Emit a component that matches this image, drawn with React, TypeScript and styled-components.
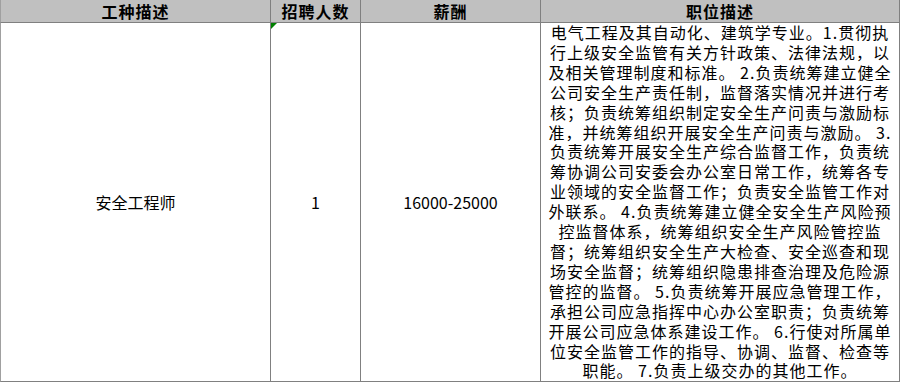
import styled, { createGlobalStyle } from 'styled-components';

const GlobalStyle = createGlobalStyle`
  html, body {
    margin: 0;
    padding: 0;
    background: #ffffff;
  }
  body {
    font-family: "Noto Sans CJK SC", "Noto Sans", sans-serif;
    color: #000000;
  }
`;

const Sheet = styled.div`
  width: 901px;
  height: 383px;
  overflow: hidden;
  background: #ffffff;
`;

const Row = styled.div<{ $height: number }>`
  display: grid;
  grid-template-columns: 270px 90px 180px 359px;
  height: ${(p) => p.$height}px;
  border-left: 1px solid #a0a0a0;
  border-bottom: 1px solid #808080;
  box-sizing: border-box;
  width: 900px;
`;

const HeadCell = styled.div`
  display: flex;
  align-items: center;
  justify-content: center;
  background: #c0c0c0;
  border-right: 1px solid #808080;
  font-size: 16px;
  font-weight: 700;
  letter-spacing: 1px;
  line-height: 22px;
  box-sizing: border-box;
`;

const Cell = styled.div`
  position: relative;
  display: flex;
  align-items: center;
  justify-content: center;
  border-right: 1px solid #808080;
  font-size: 16px;
  box-sizing: border-box;
  white-space: nowrap;
`;

const NoteMark = styled.span`
  position: absolute;
  top: 0;
  left: 0;
  width: 0;
  height: 0;
  border-top: 6px solid #008000;
  border-right: 6px solid transparent;
`;

const Desc = styled.div`
  display: flex;
  flex-direction: column;
  align-items: center;
  align-self: flex-start;
  font-size: 16px;
  letter-spacing: 1px;
  line-height: 19.9px;
  white-space: nowrap;
`;

const descLines = [
  '电气工程及其自动化、建筑学专业。1.贯彻执',
  '行上级安全监管有关方针政策、法律法规，以',
  '及相关管理制度和标准。 2.负责统筹建立健全',
  '公司安全生产责任制，监督落实情况并进行考',
  '核；负责统筹组织制定安全生产问责与激励标',
  '准，并统筹组织开展安全生产问责与激励。 3.',
  '负责统筹开展安全生产综合监督工作，负责统',
  '筹协调公司安委会办公室日常工作，统筹各专',
  '业领域的安全监督工作；负责安全监管工作对',
  '外联系。 4.负责统筹建立健全安全生产风险预',
  '控监督体系，统筹组织安全生产风险管控监',
  '督；统筹组织安全生产大检查、安全巡查和现',
  '场安全监督；统筹组织隐患排查治理及危险源',
  '管控的监督。 5.负责统筹开展应急管理工作，',
  '承担公司应急指挥中心办公室职责；负责统筹',
  '开展公司应急体系建设工作。 6.行使对所属单',
  '位安全监管工作的指导、协调、监督、检查等',
  '职能。 7.负责上级交办的其他工作。',
];

const App: React.FC = () => {
  return (
    <Sheet>
      <GlobalStyle />
      <Row $height={23}>
        <HeadCell>工种描述</HeadCell>
        <HeadCell>招聘人数</HeadCell>
        <HeadCell>薪酬</HeadCell>
        <HeadCell>职位描述</HeadCell>
      </Row>
      <Row $height={359}>
        <Cell>安全工程师</Cell>
        <Cell>
          <NoteMark />1
        </Cell>
        <Cell>16000-25000</Cell>
        <Cell>
          <Desc>
            {descLines.map((line, i) => (
              <span key={i}>{line}</span>
            ))}
          </Desc>
        </Cell>
      </Row>
    </Sheet>
  );
};

export default App;
